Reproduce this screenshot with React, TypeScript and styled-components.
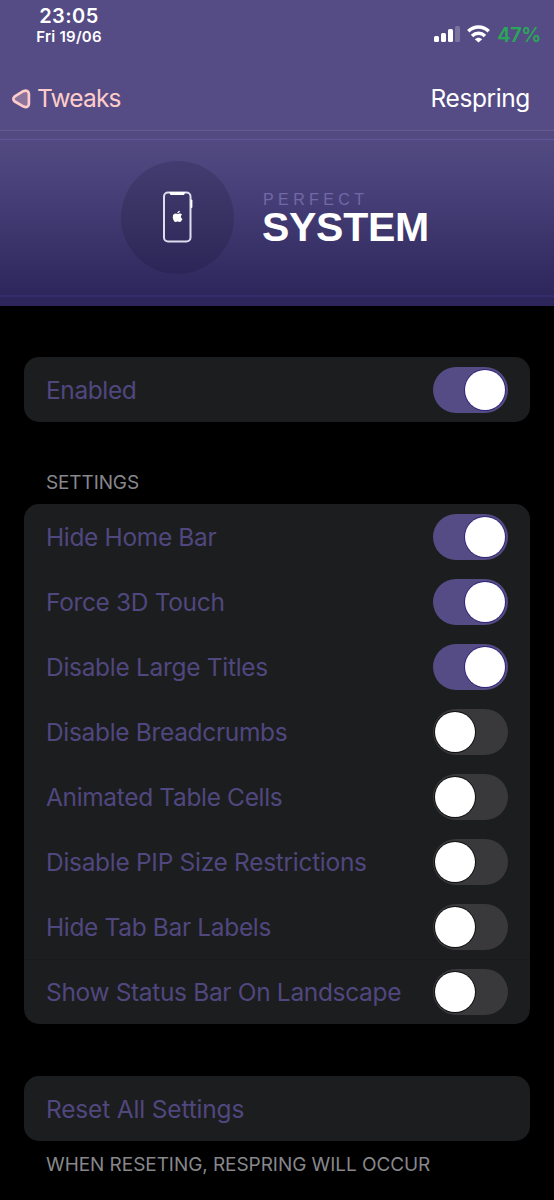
import React from "react";
import styled, { createGlobalStyle } from "styled-components";

const GlobalStyle = createGlobalStyle`
  *, *::before, *::after { box-sizing: border-box; }
  body { margin: 0; background: #000; font-family: Inter, "Liberation Sans", sans-serif; }
`;

const Screen = styled.main`
  width: 554px;
  height: 1200px;
  overflow: hidden;
  display: flex;
  flex-direction: column;
  background: #000;
`;

const Header = styled.header`
  flex: none;
  height: 131px;
  background: #554c85;
  border-bottom: 1px solid #655b8f;
`;

const StatusBar = styled.div`
  display: flex;
  justify-content: space-between;
  height: 68px;
  padding: 6px 13px 0 35px;
`;

const Clock = styled.div`
  display: flex;
  flex-direction: column;
  align-items: center;
  width: 68px;
  color: #fff;
  white-space: nowrap;
`;

const Time = styled.span`
  font-size: 20px;
  line-height: 21px;
  font-weight: 600;
  letter-spacing: 0.45px;
`;

const DateLabel = styled.span`
  font-size: 15px;
  line-height: 19px;
  font-weight: 600;
  letter-spacing: 0.25px;
`;

const Indicators = styled.div`
  display: flex;
  align-items: center;
  height: 56px;
  gap: 7px;
`;

const Battery = styled.span`
  color: #2aa65a;
  font-size: 20px;
  font-weight: 600;
  line-height: 24px;
  letter-spacing: -0.4px;
  padding-top: 1px;
`;

const NavBar = styled.nav`
  display: flex;
  align-items: center;
  justify-content: space-between;
  height: 59px;
  padding: 0 24px 0 11px;
`;

const NavButton = styled.button<{ $color: string; $spacing: number }>`
  display: flex;
  align-items: center;
  gap: 6px;
  padding: 0;
  border: 0;
  background: none;
  color: ${(p) => p.$color};
  font: 400 24.5px/30px Inter, sans-serif;
  letter-spacing: ${(p) => p.$spacing}px;

  svg {
    margin-top: 3px;
  }
`;

const Banner = styled.section`
  flex: none;
  height: 175px;
  padding: 30px 0 0 121px;
  display: flex;
  align-items: flex-start;
  gap: 28px;
  background:
    linear-gradient(#342c6c, #342c6c) 0 164px / 100% 2px no-repeat,
    linear-gradient(#61569a, #61569a) 0 8px / 100% 1px no-repeat,
    linear-gradient(#534a82 8px, #443d75 75px, #2c265b 165px, #2b255b);
`;

const Badge = styled.div`
  display: grid;
  place-items: center;
  width: 113px;
  height: 113px;
  padding-bottom: 1px;
  border-radius: 50%;
  background: linear-gradient(#433c70, #383263 50%, #2c2658);
`;

const Wordmark = styled.div`
  display: flex;
  flex-direction: column;
  padding-top: 30px;
  font-family: "Liberation Sans", sans-serif;
`;

const Eyebrow = styled.span`
  color: #7169a7;
  font-size: 16px;
  line-height: 17px;
  letter-spacing: 4.4px;
  padding-left: 1px;
`;

const Title = styled.h1`
  margin: 0;
  color: #fff;
  font-size: 41px;
  line-height: 38px;
  font-weight: 700;
  letter-spacing: -0.3px;
`;

const Content = styled.div`
  display: flex;
  flex-direction: column;
  padding: 51px 24px 0;
`;

const Card = styled.section`
  overflow: hidden;
  border-radius: 15px;
  background: #1c1d1e;
`;

const Row = styled.div<{ $divided?: boolean }>`
  display: flex;
  align-items: center;
  justify-content: space-between;
  height: 65px;
  padding: 0 22px;
  box-shadow: ${(p) => (p.$divided ? "inset 0 1px #18191a" : "none")};
`;

const Label = styled.span<{ $spacing: number }>`
  color: #50477f;
  font-size: 24.5px;
  line-height: 30px;
  white-space: nowrap;
  letter-spacing: ${(p) => p.$spacing}px;
`;

const Track = styled.button<{ $on: boolean }>`
  display: flex;
  flex: none;
  align-items: center;
  justify-content: ${(p) => (p.$on ? "flex-end" : "flex-start")};
  width: 75px;
  height: 46px;
  padding: 0 3px 0 2px;
  border: 0;
  border-radius: 23px;
  background: ${(p) => (p.$on ? "#554c85" : "#39393c")};
`;

const Knob = styled.span<{ $on: boolean }>`
  width: 40px;
  height: 40px;
  border-radius: 50%;
  background: #fff;
  box-shadow: 0 0 0 1px ${(p) => (p.$on ? "#32267a" : "#111")};
`;

const Caption = styled.p<{ $top: number; $bottom: number; $spacing: number }>`
  margin: 0;
  padding: ${(p) => p.$top}px 22px ${(p) => p.$bottom}px;
  color: #87878c;
  font-size: 19px;
  line-height: 24px;
  white-space: nowrap;
  letter-spacing: ${(p) => p.$spacing}px;
`;

const Gap = styled.div`
  height: 52px;
`;

const settings = [
  { label: "Hide Home Bar", on: true, spacing: -0.35 },
  { label: "Force 3D Touch", on: true, spacing: -0.35 },
  { label: "Disable Large Titles", on: true, spacing: -0.3 },
  { label: "Disable Breadcrumbs", on: false, spacing: -0.33 },
  { label: "Animated Table Cells", on: false, spacing: -0.35 },
  { label: "Disable PIP Size Restrictions", on: false, spacing: -0.3 },
  { label: "Hide Tab Bar Labels", on: false, spacing: -0.35 },
  { label: "Show Status Bar On Landscape", on: false, spacing: -0.34 },
];

function Toggle({ initial, label }: { initial: boolean; label: string }) {
  const [on, setOn] = React.useState(initial);
  return (
    <Track $on={on} role="switch" aria-checked={on} aria-label={label} onClick={() => setOn(!on)}>
      <Knob $on={on} />
    </Track>
  );
}

const SignalIcon = () => (
  <svg width="26" height="16" viewBox="0 0 26 16" fill="#fff">
    <rect x="0" y="10" width="5" height="6" rx="1.5" />
    <rect x="7" y="7" width="5" height="9" rx="1.5" />
    <rect x="14" y="3" width="5" height="13" rx="1.5" />
    <rect x="21" y="0" width="5" height="16" rx="1.5" opacity="0.22" />
  </svg>
);

const WifiIcon = () => (
  <svg width="23" height="18" viewBox="0 0 23 18" fill="none" stroke="#fff" strokeWidth="3.5">
    <path d="M1.3 6.3C7 .7 16 .7 21.7 6.3" />
    <path d="M5 10.9C8.8 7.3 14.2 7.3 18 10.9" />
    <path d="M11.5 17.6L7.8 14.2C9.9 12.1 13.1 12.1 15.2 14.2Z" fill="#fff" stroke="none" />
  </svg>
);

const BackIcon = () => (
  <svg width="20" height="20" viewBox="0 0 20 20">
    <path
      d="M3.8 7.4L12.2 2.2C15.5 .8 17.9 2 17.9 5V14.8C17.9 17.8 15.5 18.9 12.6 17.6L3.8 12.5C1.9 11.3 1.9 8.8 3.8 7.4Z"
      fill="#8c739c"
      stroke="#ffcccb"
      strokeWidth="2.7"
      strokeLinejoin="round"
    />
  </svg>
);

const PhoneIcon = () => (
  <svg width="32" height="52" viewBox="0 0 32 52">
    <rect x="2" y="1.5" width="26.5" height="49" rx="4" fill="none" stroke="#dfdded" strokeWidth="2" />
    <path d="M7 1H23.5L22 4H8.5Z" fill="#fff" />
    <path d="M29.5 9.5V16" stroke="#fff" strokeWidth="1.8" strokeLinecap="round" />
    <path
      transform="translate(-0.5 0)"
      d="M16 22.9C14.5 21.9 11.3 22.2 11.3 25.9C11.3 28.7 13 31 14.2 31C15 31 15.3 30.6 16.2 30.6C17 30.6 17.5 31 18.2 31C19.3 31 20.4 29.3 20.9 28C18.9 27.1 18.9 24.7 20.6 23.6C19.4 22.1 17.5 22.2 16 22.9ZM15.8 22.2C15.8 20.8 17 19.9 18.4 19.8C18.4 21.2 17.4 22.2 15.8 22.2Z"
      fill="#fff"
    />
  </svg>
);

export default function App() {
  return (
    <>
      <GlobalStyle />
      <Screen>
        <Header>
          <StatusBar>
            <Clock>
              <Time>23:05</Time>
              <DateLabel>Fri 19/06</DateLabel>
            </Clock>
            <Indicators>
              <SignalIcon />
              <WifiIcon />
              <Battery>47%</Battery>
            </Indicators>
          </StatusBar>
          <NavBar>
            <NavButton $color="#ffcccb" $spacing={-0.8}>
              <BackIcon />
              Tweaks
            </NavButton>
            <NavButton $color="#fff" $spacing={-0.4}>Respring</NavButton>
          </NavBar>
        </Header>
        <Banner>
          <Badge>
            <PhoneIcon />
          </Badge>
          <Wordmark>
            <Eyebrow>PERFECT</Eyebrow>
            <Title>SYSTEM</Title>
          </Wordmark>
        </Banner>
        <Content>
          <Card>
            <Row>
              <Label $spacing={-0.4}>Enabled</Label>
              <Toggle initial label="Enabled" />
            </Row>
          </Card>
          <Caption $top={49} $bottom={9} $spacing={-0.12}>SETTINGS</Caption>
          <Card>
            {settings.map((s, i) => (
              <Row key={s.label} $divided={i === settings.length - 1}>
                <Label $spacing={s.spacing}>{s.label}</Label>
                <Toggle initial={s.on} label={s.label} />
              </Row>
            ))}
          </Card>
          <Gap />
          <Card>
            <Row>
              <Label $spacing={-0.17}>Reset All Settings</Label>
            </Row>
          </Card>
          <Caption $top={12} $bottom={0} $spacing={-0.06}>WHEN RESETING, RESPRING WILL OCCUR</Caption>
        </Content>
      </Screen>
    </>
  );
}
